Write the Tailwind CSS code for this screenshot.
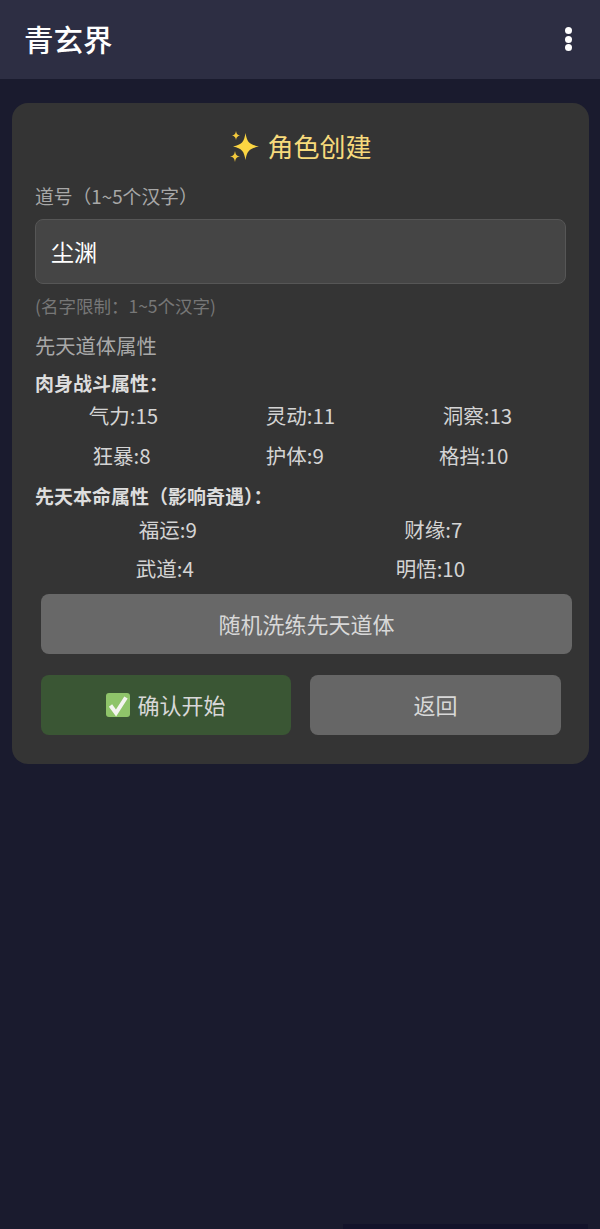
<!DOCTYPE html>
<html lang="zh-CN">
<head>
  <meta charset="UTF-8" />
  <meta name="viewport" content="width=device-width, initial-scale=1.0" />
  <title>青玄界</title>
  <script src="https://cdn.jsdelivr.net/npm/@tailwindcss/browser@4"></script>
</head>
<body class="bg-[#1a1b2e] font-['Noto_Sans_CJK_SC','Noto_Sans',sans-serif]">
  <div class="relative h-[1229px] w-[600px] overflow-hidden">

    <!-- Header -->
    <header class="flex h-[79px] items-center justify-between bg-[#2d2e43] pl-[24px] pr-[28px]">
      <h1 class="pb-[2px] text-[29.5px] leading-none font-medium text-white">青玄界</h1>
      <div class="flex flex-col gap-[1.5px] pb-[1px]">
        <span class="h-[7px] w-[7px] rounded-full bg-white"></span>
        <span class="h-[7px] w-[7px] rounded-full bg-white"></span>
        <span class="h-[7px] w-[7px] rounded-full bg-white"></span>
      </div>
    </header>

    <!-- Card -->
    <main class="mx-[12px] mt-[24px] w-[577px] rounded-[16px] bg-[#343434] pt-[25px] pr-[23px] pb-[29px] pl-[23px]">
      <h2 class="flex h-[36px] items-center justify-center gap-[8px] text-[26px] leading-[36px] text-[#f7da7c]">
        <svg class="h-[32px] w-[30px]" viewBox="0 0 30 32">
          <path d="M16.5 3 C18 12 20 14.5 30 16.5 C20 18.5 18 21 16.5 30 C15 21 13 18.5 4 16.5 C13 14.5 15 12 16.5 3 Z" fill="#fbd542" />
          <path d="M7 1 C7.6 4 8.4 5 11 5.6 C8.4 6.2 7.6 7.2 7 10 C6.4 7.2 5.6 6.2 3 5.6 C5.6 5 6.4 4 7 1 Z" fill="#f3c93c" />
          <path d="M6 21 C6.7 25 7.6 26 11 26.5 C7.6 27 6.7 28 6 32 C5.3 28 4.4 27 1 26.5 C4.4 26 5.3 25 6 21 Z" fill="#f3c93c" />
        </svg>
        <span>角色创建</span>
      </h2>

      <label class="mt-[19px] block text-[18.8px] leading-[26px] text-[#a8a8a8]">道号（1~5个汉字）</label>
      <div class="mt-[10px] flex h-[65px] w-[531px] items-center rounded-[8px] border border-[#565656] bg-[#454545] pl-[15px] text-[23px] text-white">尘渊</div>
      <p class="mt-[10px] text-[17.5px] leading-[24px] text-[#777777]">(名字限制：1~5个汉字)</p>

      <h3 class="mt-[13px] text-[20.3px] leading-[28px] font-normal text-[#a8a8a8]">先天道体属性</h3>

      <p class="mt-[12px] text-[19px] leading-[24px] font-bold text-[#dddddd]">肉身战斗属性：</p>
      <div class="w-[531px] text-[20.5px] leading-[40px] text-[#d4d4d4]">
        <div class="flex justify-around">
          <span>气力:15</span>
          <span>灵动:11</span>
          <span>洞察:13</span>
        </div>
        <div class="flex justify-around">
          <span>狂暴:8</span>
          <span>护体:9</span>
          <span>格挡:10</span>
        </div>
      </div>

      <p class="mt-[9px] text-[19px] leading-[24px] font-bold text-[#dddddd]">先天本命属性（影响奇遇）：</p>
      <div class="mt-[2px] w-[531px] text-[20.5px] leading-[39px] text-[#d4d4d4]">
        <div class="flex justify-around">
          <span>福运:9</span>
          <span>财缘:7</span>
        </div>
        <div class="flex justify-around">
          <span>武道:4</span>
          <span>明悟:10</span>
        </div>
      </div>

      <button class="mt-[6px] ml-[6px] block h-[60px] w-[531px] rounded-[8px] bg-[#686868] pb-[2px] text-[22px] text-[#d8d8d8]">随机洗练先天道体</button>

      <div class="mt-[21px] ml-[6px] flex gap-[19px]">
        <button class="flex h-[60px] w-[250px] items-center justify-center gap-[7px] rounded-[8px] bg-[#3a5634] pb-[2px] text-[22px] text-[#d8d8d8]">
          <svg class="mt-[2px] h-[24px] w-[24px]" viewBox="0 0 24 24">
            <rect width="24" height="24" rx="3" fill="#8fc46a" />
            <path d="M4.5 12.5 L10 20 L20 4.5" fill="none" stroke="#f4f4f0" stroke-width="4" />
          </svg>
          <span>确认开始</span>
        </button>
        <button class="h-[60px] w-[251px] rounded-[8px] bg-[#666666] pb-[2px] text-[22px] text-[#d8d8d8]">返回</button>
      </div>
    </main>

    <!-- Dark strip at the bottom edge -->
    <div class="absolute right-[12px] bottom-0 h-[5px] w-[245px] bg-[#13132a]"></div>
  </div>
</body>
</html>
